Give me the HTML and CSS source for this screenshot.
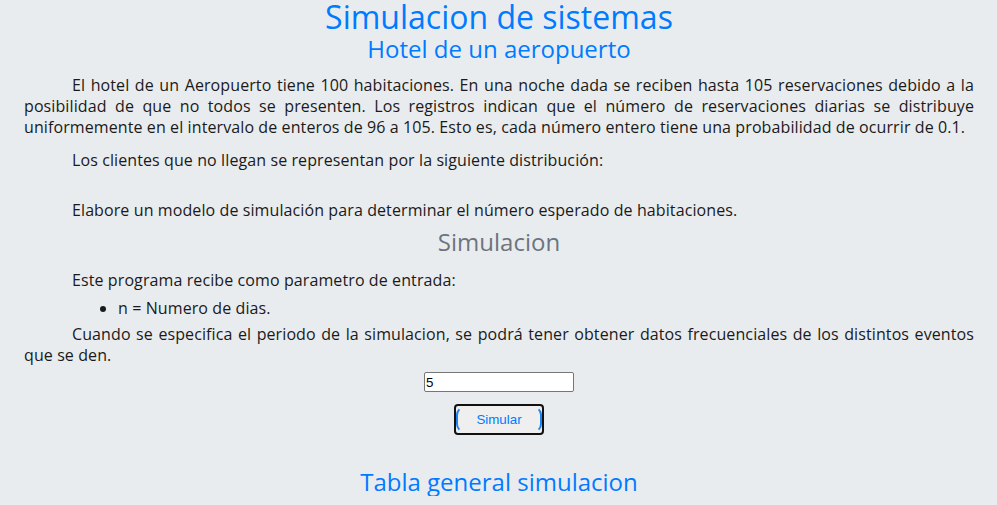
FILE: index.html
```html
<!DOCTYPE html>
<html lang="es">
<head>
<meta charset="utf-8">
<title>Simulacion de sistemas</title>
<link rel="stylesheet" href="styles.css">
</head>
<body>
<main class="page">
  <h1 class="title">Simulacion de sistemas</h1>
  <h2 class="subtitle">Hotel de un aeropuerto</h2>
  <p class="text">El hotel de un Aeropuerto tiene 100 habitaciones. En una noche dada se reciben hasta 105 reservaciones debido a la posibilidad de que no todos se presenten. Los registros indican que el número de reservaciones diarias se distribuye uniformemente en el intervalo de enteros de 96 a 105. Esto es, cada número entero tiene una probabilidad de ocurrir de 0.1.</p>
  <p class="text">Los clientes que no llegan se representan por la siguiente distribución:</p>
  <div class="blank"></div>
  <p class="text">Elabore un modelo de simulación para determinar el número esperado de habitaciones.</p>
  <h3 class="section">Simulacion</h3>
  <p class="text">Este programa recibe como parametro de entrada:</p>
  <ul class="list">
    <li>n = Numero de dias.</li>
  </ul>
  <p class="text">Cuando se especifica el periodo de la simulacion, se podrá tener obtener datos frecuenciales de los distintos eventos que se den.</p>
  <form class="form">
    <input class="field" type="text" value="5">
    <button class="btn" type="button"><span class="btn-inner">Simular</span></button>
  </form>
  <h2 class="table-title">Tabla general simulacion</h2>
</main>
</body>
</html>
```
FILE: styles.css
```css
html, body {
  margin: 0;
  padding: 0;
}
body {
  background: #e9ecef;
  color: #1a1a1a;
  font-family: "Open Sans", "Noto Sans", sans-serif;
  font-size: 16px;
  letter-spacing: 0.1px;
  line-height: 21px;
}
.page {
  padding: 0 23px 0 24px;
  display: flex;
  flex-direction: column;
}
.title {
  margin: 0;
  font-size: 32px;
  line-height: 34px;
  font-weight: 400;
  letter-spacing: 0;
  color: #007bff;
  text-align: center;
}
.subtitle {
  margin: 0 0 12px;
  font-size: 24px;
  line-height: 29px;
  font-weight: 400;
  letter-spacing: 0;
  color: #007bff;
  text-align: center;
}
.text {
  margin: 0 0 12px;
  text-align: justify;
  text-indent: 48px;
}
.blank {
  height: 17px;
}
.section {
  margin: -4px 0 15px;
  font-size: 24px;
  line-height: 26px;
  font-weight: 400;
  letter-spacing: 0;
  color: #6c757d;
  text-align: center;
}
.list {
  margin: -5px 0 5px;
  padding-left: 94px;
}
.form {
  display: flex;
  flex-direction: column;
  align-items: center;
  margin-top: -6px;
}
.field {
  box-sizing: border-box;
  width: 150px;
  height: 20px;
  margin: 0;
  padding: 0 1px;
  border: 1px solid #767676;
  border-radius: 2px;
  background: #fff;
  font-family: "Liberation Sans", Arial, sans-serif;
  font-size: 13.33px;
  letter-spacing: 0;
  color: #000;
}
.btn {
  box-sizing: border-box;
  width: 90px;
  height: 31px;
  margin-top: 12px;
  padding: 0;
  border: 2px solid #111;
  border-radius: 4px;
  background: #efefef;
  display: flex;
}
.btn-inner {
  flex: 1;
  display: flex;
  align-items: center;
  justify-content: center;
  border: 2px solid #1a82f7;
  border-radius: 9px;
  border-top-color: #efefef;
  border-bottom-color: #efefef;
  font-family: "Liberation Sans", Arial, sans-serif;
  font-size: 13.33px;
  letter-spacing: 0;
  color: #007bff;
}
.table-title {
  margin: 32px 0 0;
  font-size: 24px;
  line-height: 29px;
  font-weight: 400;
  letter-spacing: 0;
  color: #007bff;
  text-align: center;
}
```
